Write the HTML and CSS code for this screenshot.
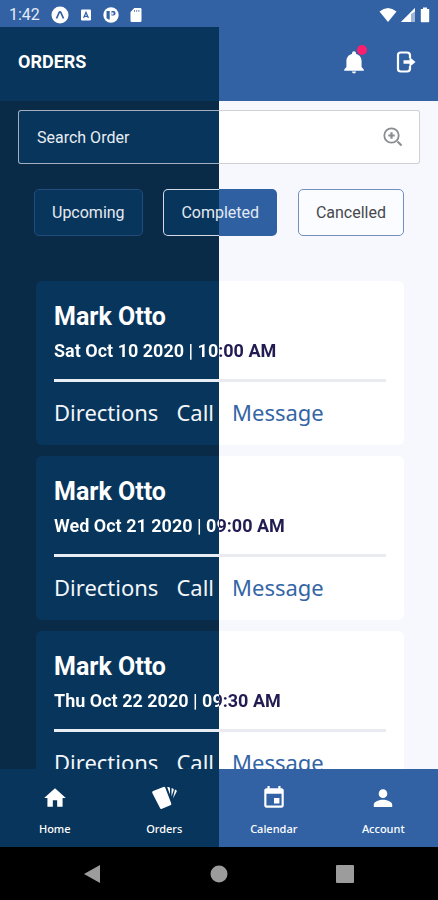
FILE: index.html
```html
<!DOCTYPE html>
<html lang="en">
<head>
    <meta charset="UTF-8">
    <meta name="viewport" content="width=device-width, initial-scale=1.0">
    <title>Orders</title>
    <link rel="stylesheet" href="styles.css">
</head>
<body>
    <div class="status-bar">
        <span class="clock">1:42</span>
        <div class="status-left">
            <svg width="18" height="18" viewBox="0 0 18 18"><circle cx="9" cy="9" r="8.5" fill="#fff"/><path d="M5.500 12.500 8.200 6.500Q9 5.200 9.800 6.500L12.500 12.500" fill="none" stroke="#3262a4" stroke-width="1.700"/></svg>
            <svg width="12" height="18" viewBox="0 0 12 18"><rect x="1" y="3.5" width="10" height="11" rx="1" fill="#fff"/><path d="M3.6 12 6 6.2 8.4 12M4.5 10.3h3" fill="none" stroke="#3262a4" stroke-width="1.2"/></svg>
            <svg width="16" height="18" viewBox="0 0 16 18"><circle cx="8" cy="9" r="7.7" fill="#fff"/><path d="M3.5 5h3.2v8.5H5.5L3.5 12zM8.5 5h1.8a2.3 2.3 0 0 1 0 4.6H8.5z" fill="#3262a4"/><path d="M8.5 6.5h2v2h-2z" fill="#fff"/></svg>
            <svg width="12" height="18" viewBox="0 0 12 18"><path d="M4.3 2h6a1.2 1.2 0 0 1 1.2 1.2v11.6a1.2 1.2 0 0 1-1.2 1.2H1.7a1.2 1.2 0 0 1-1.2-1.2V6z" fill="#fff"/><path d="M4.500 4v1.800M6.700 4v1.800M8.900 4v1.800" stroke="#3262a4" stroke-width=".8"/></svg>
        </div>
        <div class="status-right">
            <svg width="18" height="16" viewBox="0 0 18 16"><path d="M.5 4.5Q9-2.5 17.5 4.5L9 15z" fill="#fff"/></svg>
            <svg width="15" height="16" viewBox="0 0 15 16"><path d="M14 1v14H0z" fill="#9fb5d6"/><path d="M10 5v10H0z" fill="#fff"/><path d="M14 1v3.5L10 7V5z" fill="#fff"/></svg>
            <svg width="10" height="16" viewBox="0 0 10 16"><path d="M3 .5h4V2h2.2v12.500a.8.8 0 0 1-.8.8H1.600a.8.8 0 0 1-.8-.8V2H3z" fill="#fff"/></svg>
        </div>
    </div>

    <header class="header">
        <h1>ORDERS</h1>
        <div class="header-actions">
            <button class="icon-btn bell" aria-label="Notifications">
                <svg width="26" height="26" viewBox="0 0 24 24" fill="#fff"><path d="M12 22.500c1 0 1.800-.8 1.800-1.800h-3.600c0 1 .8 1.800 1.800 1.800zM19 16.500V11c0-3.300-2-5.800-5.200-6.500V3.800a1.800 1.800 0 0 0-3.600 0v.7C7 5.200 5 7.700 5 11v5.500l-2 2.500v1h18v-1z"/></svg>
                <span class="dot"></span>
            </button>
            <button class="icon-btn" aria-label="Log out">
                <svg width="24" height="24" viewBox="0 0 24 24"><path d="M17 8V5.500Q17 2.500 14 2.500H7.800Q5 2.500 5 5v14q0 2.500 2.800 2.500H14q3 0 3-3V16" fill="none" stroke="#fff" stroke-width="2.200"/><path d="M10.500 10.300H16.500V7l6 5-6 5v-3.300h-6z" fill="#fff"/></svg>
            </button>
        </div>
    </header>

    <main class="content">
        <form class="search">
            <input type="text" placeholder="Search Order" aria-label="Search Order">
            <button type="button" class="icon-btn" aria-label="Search">
                <svg width="22" height="22" viewBox="0 0 22 22" fill="none" stroke="#8b8d90"><circle cx="10.500" cy="9.500" r="7.200" stroke-width="1.800"/><path d="M10.500 6.300v6.400M7.300 9.500h6.400" stroke-width="2.200"/><path d="M16.500 15.500l4 4" stroke-width="2.200"/></svg>
            </button>
        </form>

        <div class="filters">
            <button class="filter">Upcoming</button>
            <button class="filter active">Completed</button>
            <button class="filter plain">Cancelled</button>
        </div>

        <section class="orders">
            <article class="card">
                <h2>Mark Otto</h2>
                <p class="date">Sat Oct 10 2020 | 10:00 AM</p>
                <div class="links">
                    <a href="#">Directions</a>
                    <a href="#">Call</a>
                    <a href="#" class="message">Message</a>
                </div>
            </article>
            <article class="card">
                <h2>Mark Otto</h2>
                <p class="date">Wed Oct 21 2020 | 09:00 AM</p>
                <div class="links">
                    <a href="#">Directions</a>
                    <a href="#">Call</a>
                    <a href="#" class="message">Message</a>
                </div>
            </article>
            <article class="card">
                <h2>Mark Otto</h2>
                <p class="date">Thu Oct 22 2020 | 09:30 AM</p>
                <div class="links">
                    <a href="#">Directions</a>
                    <a href="#">Call</a>
                    <a href="#" class="message">Message</a>
                </div>
            </article>
        </section>
    </main>

    <nav class="tab-bar">
        <a href="#">
            <svg width="26" height="26" viewBox="0 0 24 24" fill="#fff"><path d="M10 20v-6h4v6h5v-8h3L12 3 2 12h3v8z"/></svg>
            Home
        </a>
        <a href="#">
            <svg width="26" height="26" viewBox="0 0 26 26" fill="#fff"><path d="M2.200 6 12.300 2a1.500 1.500 0 0 1 2 .8l5.900 15.400a1.500 1.500 0 0 1-.8 2L11 23.800a1.500 1.500 0 0 1-2-.8L1.300 8a1.500 1.500 0 0 1 .9-2z"/><path d="M16.200 2h1.300a1.500 1.500 0 0 1 1.500 1.500v6zM20.600 3l1.200.5a1.500 1.500 0 0 1 .8 1.900l-2.100 6zM24 4.500l1 .5a1.300 1.300 0 0 1 .6 1.700L22 13.500z"/></svg>
            Orders
        </a>
        <a href="#">
            <svg width="28" height="26" viewBox="0 0 24 24" fill="#fff"><path d="M17 12h-5v5h5zM16 1v2H8V1H6v2H5c-1.110 0-1.990.9-1.990 2L3 19c0 1.100.89 2 2 2h14c1.100 0 2-.9 2-2V5c0-1.100-.9-2-2-2h-1V1zm3 18H5V8h14z"/></svg>
            Calendar
        </a>
        <a href="#">
            <svg width="28" height="26" viewBox="0 0 24 24" fill="#fff"><path d="M12 12c2.210 0 4-1.790 4-4s-1.790-4-4-4-4 1.790-4 4 1.790 4 4 4zm0 1.500c-3 0-8.500 1.500-8.500 4.500v2.300h17V18c0-3-5.500-4.500-8.500-4.500z"/></svg>
            Account
        </a>
    </nav>

    <div class="system-bar">
        <button class="icon-btn" aria-label="Back">
            <svg width="20" height="20" viewBox="0 0 20 20"><path d="M17 1v18L1 10z" fill="#9c9c9c"/></svg>
        </button>
        <button class="icon-btn" aria-label="Home screen">
            <svg width="20" height="20" viewBox="0 0 20 20"><circle cx="10" cy="10" r="8.500" fill="#9c9c9c"/></svg>
        </button>
        <button class="icon-btn" aria-label="Recent apps">
            <svg width="20" height="20" viewBox="0 0 20 20"><rect x="1" y="1" width="18" height="18" rx="1" fill="#9c9c9c"/></svg>
        </button>
    </div>
</body>
</html>
```

FILE: styles.css
```css
/* dark theme on the left half of the window, light theme on the right half */
:root {
    --blue: #3262a4;
    --navy: #08355b;
    --page: linear-gradient(90deg, #0a2b48 50%, #f7f8fd 50%) fixed;
    --bar: linear-gradient(90deg, #08355b 50%, #3262a4 50%) fixed;
    --surface: linear-gradient(90deg, #08355b 50%, #ffffff 50%) fixed;
    --line: linear-gradient(90deg, #e9edf4 50%, #e9ebf0 50%) fixed;
}
* {
    box-sizing: border-box;
}
body {
    margin: 0;
    height: 100vh;
    display: flex;
    flex-direction: column;
    font-family: Roboto, sans-serif;
    color: white;
    overflow: hidden;
}
svg {
    display: block;
}
.icon-btn {
    padding: 0;
    border: none;
    background: none;
    cursor: pointer;
}

.status-bar {
    flex: none;
    height: 27px;
    padding: 2px 8px 0 9px;
    display: flex;
    align-items: center;
    background: var(--blue);
}
.clock {
    font-size: 16px;
    line-height: 20px;
    color: #e4ebf5;
}
.status-left {
    display: flex;
    gap: 11px;
    margin-left: 11px;
}
.status-right {
    display: flex;
    gap: 4px;
    margin-left: auto;
}

.header {
    flex: none;
    height: 74px;
    padding: 0 21px 4px 18px;
    display: flex;
    align-items: center;
    justify-content: space-between;
    background: var(--bar);
}
.header h1 {
    margin: 0;
    font-size: 18px;
    line-height: 24px;
    font-weight: 700;
}
.header-actions {
    display: flex;
    align-items: center;
    gap: 26px;
}
.bell {
    position: relative;
}
.dot {
    position: absolute;
    top: -4px;
    right: 0;
    width: 10px;
    height: 10px;
    border-radius: 50%;
    background: #fb1f6e;
}

.content {
    flex: 1;
    min-height: 0;
    padding: 9px 18px 0;
    overflow: hidden;
    background: var(--page);
}
.search {
    display: flex;
    align-items: center;
    height: 54px;
    padding: 0 16px 0 18px;
    border: 1px solid transparent;
    border-radius: 3px;
    background:
        linear-gradient(90deg, #08355b 50%, #ffffff 50%) fixed padding-box,
        linear-gradient(90deg, #a3afbf 50%, #cfd1d4 50%) fixed border-box;
}
.search input {
    flex: 1;
    min-width: 0;
    padding: 0;
    border: none;
    outline: none;
    background: none;
    color: white;
    font-family: inherit;
    font-size: 16px;
}
.search input::placeholder {
    color: #e8edf4;
    opacity: 1;
}

.filters {
    display: flex;
    justify-content: space-between;
    gap: 8px;
    margin-top: 25px;
    padding: 0 16px;
}
.filter {
    height: 47px;
    padding: 0 17px;
    border: 1px solid #234c7c;
    border-radius: 5px;
    background: var(--navy);
    color: #e4eaf2;
    font-family: inherit;
    font-size: 16px;
    cursor: pointer;
}
.filter.active {
    border-color: transparent;
    background:
        linear-gradient(90deg, #08355b 50%, #2e60a2 50%) fixed padding-box,
        linear-gradient(90deg, #d5dbe4 50%, #2e60a2 50%) fixed border-box;
}
.filter.plain {
    border-color: #7290bd;
    background: #fbfcff;
    color: #47484c;
}

.orders {
    display: flex;
    flex-direction: column;
    gap: 11px;
    margin-top: 45px;
    padding: 0 16px 0 18px;
}
.card {
    flex: none;
    padding: 20px 18px;
    border-radius: 6px;
    background: var(--surface);
}
.card h2 {
    margin: 0;
    font-size: 25px;
    line-height: 32px;
    font-weight: 700;
}
.date {
    margin: 5px 0 15px;
    font-size: 18px;
    line-height: 26px;
    font-weight: 700;
    color: transparent;
    background: linear-gradient(90deg, #ffffff 50%, #221c52 50%) fixed;
    -webkit-background-clip: text;
    background-clip: text;
}
.links {
    display: flex;
    gap: 18px;
    position: relative;
    padding-top: 20px;
    font-family: "Noto Sans", sans-serif;
    font-size: 22px;
    line-height: 26px;
}
.links::before {
    content: "";
    position: absolute;
    top: 0;
    left: 0;
    right: 0;
    height: 3px;
    background: var(--line);
}
.links a {
    color: #f3f6fa;
    text-decoration: none;
}
.links .message {
    color: #3465a5;
}

.tab-bar {
    flex: none;
    display: flex;
    height: 78px;
    background: var(--bar);
}
.tab-bar a {
    flex: 1;
    display: flex;
    flex-direction: column;
    align-items: center;
    gap: 10px;
    padding-top: 16px;
    color: white;
    font-family: "Noto Sans", sans-serif;
    font-size: 11px;
    line-height: 16px;
    font-weight: 500;
    text-decoration: none;
}

.system-bar {
    flex: none;
    height: 53px;
    display: flex;
    align-items: center;
    justify-content: space-between;
    padding: 0 83px;
    background: black;
}
```
